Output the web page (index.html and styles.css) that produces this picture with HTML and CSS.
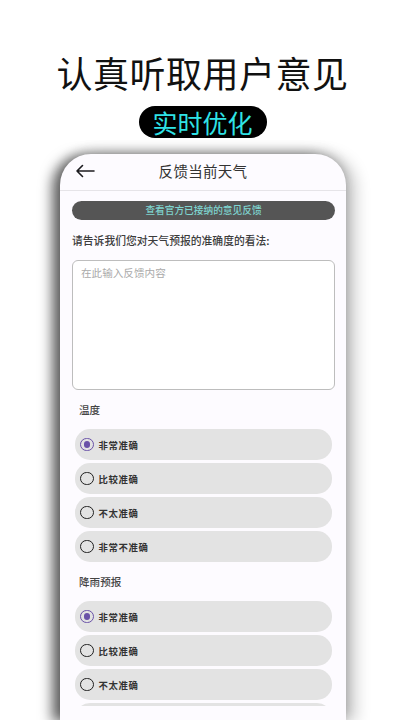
FILE: index.html
```html
<!DOCTYPE html>
<html lang="zh">
<head>
<meta charset="utf-8">
<link rel="stylesheet" href="styles.css">
</head>
<body>
<div class="page">
  <h1 class="headline">认真听取用户意见</h1>
  <div class="pill">实时优化</div>
  <div class="phone">
    <div class="screen">
      <div class="appbar">
        <svg class="back" width="20" height="14" viewBox="0 0 20 14"><path d="M2 7 H19 M7.5 1.5 L2 7 L7.5 12.5" fill="none" stroke="#1c1b1f" stroke-width="1.6" stroke-linecap="round" stroke-linejoin="round"/></svg>
        <div class="apptitle">反馈当前天气</div>
      </div>
      <div class="content">
        <div class="banner">查看官方已接纳的意见反馈</div>
        <div class="prompt">请告诉我们您对天气预报的准确度的看法:</div>
        <div class="textarea">在此输入反馈内容</div>
        <div class="group-label">温度</div>
        <div class="options">
          <div class="opt"><span class="radio on"></span><span class="opt-text">非常准确</span></div>
          <div class="opt"><span class="radio"></span><span class="opt-text">比较准确</span></div>
          <div class="opt"><span class="radio"></span><span class="opt-text">不太准确</span></div>
          <div class="opt"><span class="radio"></span><span class="opt-text">非常不准确</span></div>
        </div>
        <div class="group-label">降雨预报</div>
        <div class="options">
          <div class="opt"><span class="radio on"></span><span class="opt-text">非常准确</span></div>
          <div class="opt"><span class="radio"></span><span class="opt-text">比较准确</span></div>
          <div class="opt"><span class="radio"></span><span class="opt-text">不太准确</span></div>
          <div class="opt"></div>
        </div>
      </div>
    </div>
  </div>
</div>
</body>
</html>
```

FILE: styles.css
```css
* { box-sizing: border-box; margin: 0; padding: 0; }
html, body { width: 405px; height: 720px; overflow: hidden; background: #fff; }
body { font-family: "Noto Sans CJK SC", "Noto Sans", sans-serif; }
.page { display: flex; flex-direction: column; align-items: center; width: 405px; height: 720px; }
.headline {
  margin-top: 50px;
  font-size: 36px; line-height: 44px; font-weight: 400; color: #111;
  letter-spacing: 0.5px;
}
.pill {
  margin-top: 12px;
  width: 128px; height: 32px; border-radius: 16px;
  background: #000; color: #2fe3e6;
  font-size: 25px; line-height: 32px; text-align: center; font-weight: 400;
}
.phone {
  margin-top: 16px;
  width: 286px; height: 566px; flex: none;
  margin-left: 1px;
  background: #fdfbff;
  border-radius: 31px 31px 0 0;
  box-shadow: -8px 2px 13px rgba(0,0,0,0.6), 9px 2px 16px rgba(0,0,0,0.22), 0 -4px 12px rgba(0,0,0,0.12);
}
.screen { height: 552px; overflow: hidden; border-radius: 31px 31px 0 0; }
.appbar {
  position: relative;
  height: 37px; border-bottom: 1px solid #e6e4e8;
  display: flex; align-items: center; justify-content: center;
}
.back { position: absolute; left: 15px; top: 10px; }
.apptitle { font-size: 14.5px; line-height: 18px; margin-top: -3px; color: #333; letter-spacing: 0.3px; }
.content { padding: 10px 11px 0 12px; display: flex; flex-direction: column; }
.banner {
  height: 19px; border-radius: 10px; background: #555;
  color: #7fd4cf; font-size: 9.7px; line-height: 19px; text-align: center; font-weight: 500;
}
.prompt { margin-top: 12px; font-size: 10.8px; line-height: 16px; color: #3c3c3c; font-weight: 500; }
.textarea {
  margin-top: 12px; height: 130px;
  border: 1px solid #bdbdbd; border-radius: 6px; background: #fff;
  padding: 4px 8px; font-size: 10.6px; line-height: 16px; color: #aaa;
}
.group-label { margin-top: 12px; padding-left: 7px; font-size: 10.6px; line-height: 16px; color: #444; font-weight: 500; }
.options { margin-top: 11px; margin-left: 3px; margin-right: 3px; display: flex; flex-direction: column; gap: 3px; }
.opt {
  height: 31px; flex: none; border-radius: 15px; background: #e3e3e3;
  display: flex; align-items: center; padding-left: 5px; gap: 5px;
}
.radio {
  width: 13.5px; height: 13.5px; border-radius: 50%;
  border: 1.7px solid #1f1f1f; flex: none;
  display: flex; align-items: center; justify-content: center;
}
.radio.on { border-color: #6a52a8; }
.radio.on::after { content: ""; width: 6.5px; height: 6.5px; border-radius: 50%; background: #6a52a8; }
.opt-text { font-size: 9.4px; font-weight: 700; color: #333; letter-spacing: 0.6px; }
```
